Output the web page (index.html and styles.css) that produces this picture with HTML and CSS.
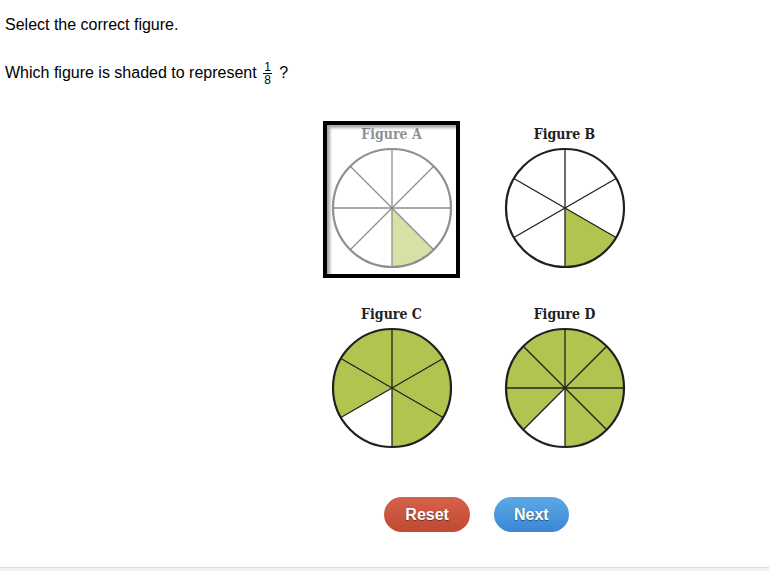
FILE: index.html
```html
<!DOCTYPE html>
<html>
<head>
<meta charset="utf-8">
<link rel="stylesheet" href="styles.css">
</head>
<body>
<div class="prompt">
  <p>Select the correct figure.</p>
  <p class="question">Which figure is shaded to represent <span class="frac"><span class="num">1</span><span class="den">8</span></span> ?</p>
</div>
<div class="figures">
  <div class="grid">
    <div class="fig selected">
      <div class="fig-title">Figure A</div>
      <svg class="pie" width="122" height="122" viewBox="0 0 122 122">
        <circle cx="61" cy="61" r="59" fill="#fff"/>
        <path d="M61 61 L102.72 102.72 A59 59 0 0 1 61 120 Z" fill="#b0c44f"/>
        <g stroke="#231f20" stroke-width="1.3">
          <line x1="61" y1="2" x2="61" y2="120"/>
          <line x1="2" y1="61" x2="120" y2="61"/>
          <line x1="19.28" y1="19.28" x2="102.72" y2="102.72"/>
          <line x1="102.72" y1="19.28" x2="19.28" y2="102.72"/>
        </g>
        <circle cx="61" cy="61" r="59" fill="none" stroke="#231f20" stroke-width="2.2"/>
      </svg>
    </div>
    <div class="fig">
      <div class="fig-title">Figure B</div>
      <svg class="pie" width="122" height="122" viewBox="0 0 122 122">
        <circle cx="61" cy="61" r="59" fill="#fff"/>
        <path d="M61 61 L112.1 90.5 A59 59 0 0 1 61 120 Z" fill="#b0c44f"/>
        <g stroke="#231f20" stroke-width="1.3">
          <line x1="61" y1="2" x2="61" y2="120"/>
          <line x1="112.1" y1="31.5" x2="9.9" y2="90.5"/>
          <line x1="112.1" y1="90.5" x2="9.9" y2="31.5"/>
        </g>
        <circle cx="61" cy="61" r="59" fill="none" stroke="#231f20" stroke-width="2.2"/>
      </svg>
    </div>
    <div class="fig">
      <div class="fig-title">Figure C</div>
      <svg class="pie" width="122" height="122" viewBox="0 0 122 122">
        <circle cx="61" cy="61" r="59" fill="#b0c44f"/>
        <path d="M61 61 L61 120 A59 59 0 0 1 9.9 90.5 Z" fill="#fff"/>
        <g stroke="#231f20" stroke-width="1.3">
          <line x1="61" y1="2" x2="61" y2="120"/>
          <line x1="112.1" y1="31.5" x2="9.9" y2="90.5"/>
          <line x1="112.1" y1="90.5" x2="9.9" y2="31.5"/>
        </g>
        <circle cx="61" cy="61" r="59" fill="none" stroke="#231f20" stroke-width="2.2"/>
      </svg>
    </div>
    <div class="fig">
      <div class="fig-title">Figure D</div>
      <svg class="pie" width="122" height="122" viewBox="0 0 122 122">
        <circle cx="61" cy="61" r="59" fill="#b0c44f"/>
        <path d="M61 61 L61 120 A59 59 0 0 1 19.28 102.72 Z" fill="#fff"/>
        <g stroke="#231f20" stroke-width="1.3">
          <line x1="61" y1="2" x2="61" y2="120"/>
          <line x1="2" y1="61" x2="120" y2="61"/>
          <line x1="19.28" y1="19.28" x2="102.72" y2="102.72"/>
          <line x1="102.72" y1="19.28" x2="19.28" y2="102.72"/>
        </g>
        <circle cx="61" cy="61" r="59" fill="none" stroke="#231f20" stroke-width="2.2"/>
      </svg>
    </div>
  </div>
  <div class="actions">
    <button class="btn btn-reset">Reset</button>
    <button class="btn btn-next">Next</button>
  </div>
</div>
<div class="footer"></div>
</body>
</html>
```
FILE: styles.css
```css
html, body {
  margin: 0;
  padding: 0;
  background: #fff;
  overflow: hidden;
}
body {
  font-family: "Liberation Sans", Arial, sans-serif;
  color: #000;
}
.prompt {
  padding: 16px 5px 0;
}
.prompt p {
  margin: 0;
  font-size: 16px;
  line-height: 18px;
  height: 18px;
}
.prompt p + p {
  margin-top: 29px;
}
.frac {
  display: inline-flex;
  flex-direction: column;
  align-items: center;
  vertical-align: middle;
  font-size: 12px;
  line-height: 9px;
  margin: 0 3px 0 2px;
}
.frac .num {
  border-bottom: 1px solid #000;
  padding: 0 1px 1px;
}
.frac .den {
  padding-top: 2px;
}
.figures {
  margin: 40px 0 0 323px;
  width: 310px;
}
.grid {
  display: grid;
  grid-template-columns: 137px 137px;
  column-gap: 36px;
  row-gap: 23px;
}
.fig {
  box-sizing: border-box;
  height: 157px;
  border: 4px solid transparent;
  display: flex;
  flex-direction: column;
  align-items: center;
}
.fig.selected {
  border-color: #000;
  box-shadow: inset 3px 3px 3px rgba(0, 0, 0, 0.35);
}
.fig-title {
  font-family: "DejaVu Serif Condensed", "DejaVu Serif", serif;
  font-weight: 700;
  font-size: 14px;
  line-height: 18px;
  color: #231f20;
}
.pie {
  display: block;
  margin-top: 4px;
}
.selected .fig-title,
.selected .pie {
  opacity: 0.5;
}
.actions {
  display: flex;
  justify-content: center;
  gap: 24px;
  margin: 39px 3px 0 0;
}
.btn {
  font-family: "Liberation Sans", Arial, sans-serif;
  font-weight: 700;
  font-size: 16px;
  line-height: 19px;
  color: #fff;
  border: none;
  border-radius: 18px;
  padding: 8px 20px;
  text-shadow: 0 1px 1px rgba(0, 0, 0, 0.45);
  cursor: pointer;
}
.btn-reset {
  background: linear-gradient(#d6624c, #bf4931);
  padding: 8px 21px;
}
.btn-next {
  background: linear-gradient(#5da8e5, #3987d6);
}
.footer {
  margin-top: 35px;
  height: 40px;
  border-top: 1px solid #dcdcdc;
  background: #f2f2f2;
}
```
